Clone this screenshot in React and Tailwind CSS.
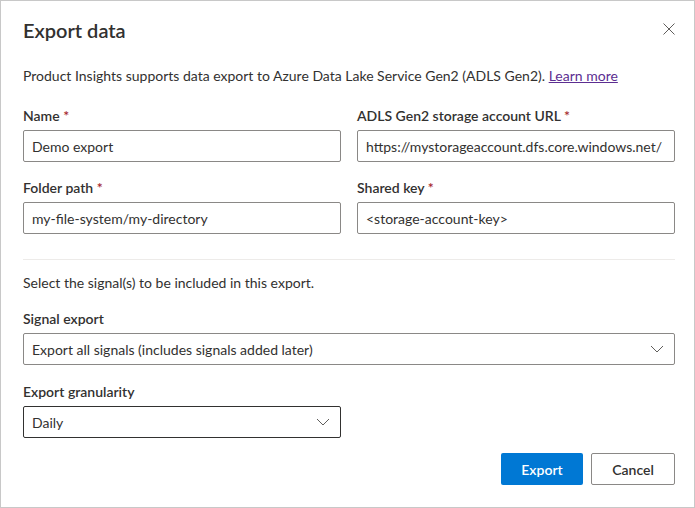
import React from "react";

const font = { fontFamily: 'Lato, "Noto Sans", sans-serif' };

function Label({ children }) {
  return (
    <div className="text-[14px] font-semibold leading-5 text-[#323130] mb-[4px] h-5">
      {children} <span className="text-[#a4262c]">*</span>
    </div>
  );
}

function Field({ label, value }) {
  return (
    <div className="flex flex-col">
      <Label>{label}</Label>
      <div className="h-8 border border-[#8a8886] rounded-[2px] px-2 flex items-center text-[14px] text-[#323130] whitespace-nowrap overflow-hidden">
        {value}
      </div>
    </div>
  );
}

function Chevron() {
  return (
    <svg width="14" height="8" viewBox="0 0 14 8" fill="none">
      <path d="M1 1l6 6 6-6" stroke="#605e5c" strokeWidth="1" />
    </svg>
  );
}

export default function App() {
  return (
    <div className="w-[695px] h-[508px] bg-white border border-[#c8c8c8] text-[#323130]" style={font}>
      <div className="flex items-center justify-between pl-[22px] pr-[19px] pt-[14px] h-[44px]">
        <h1 className="text-[20px] font-semibold leading-7 text-[#323130]">Export data</h1>
        <svg width="12" height="12" viewBox="0 0 12 12" className="mt-[-2px]">
          <path d="M0.5 0.5l11 11M11.5 0.5l-11 11" stroke="#605e5c" strokeWidth="1" />
        </svg>
      </div>
      <div className="pl-[22px] pr-[19px]">
        <p className="text-[14px] leading-5 mt-[21px]">
          Product Insights supports data export to Azure Data Lake Service Gen2 (ADLS Gen2).{" "}
          <span className="text-[#5c2e91] underline">Learn more</span>
        </p>
        <div className="grid grid-cols-2 gap-x-4 gap-y-[16px] mt-[20px]">
          <Field label="Name" value="Demo export" />
          <Field label="ADLS Gen2 storage account URL" value="https://mystorageaccount.dfs.core.windows.net/" />
          <Field label="Folder path" value="my-file-system/my-directory" />
          <Field label="Shared key" value="<storage-account-key>" />
        </div>
        <div className="h-px bg-[#edebe9] mt-[25px]" />
        <p className="text-[14px] leading-5 mt-[13px]">Select the signal(s) to be included in this export.</p>
        <div className="text-[14px] font-semibold leading-5 mt-[16px] mb-[4px]">Signal export</div>
        <div className="h-8 border border-[#8a8886] rounded-[2px] pl-2 pr-[10px] flex items-center justify-between text-[14px]">
          <span>Export all signals (includes signals added later)</span>
          <Chevron />
        </div>
        <div className="text-[14px] font-semibold leading-5 mt-[17px] mb-[4px]">Export granularity</div>
        <div className="w-[318px] h-8 border border-[#323130] rounded-[2px] pl-2 pr-[10px] flex items-center justify-between text-[14px]">
          <span>Daily</span>
          <Chevron />
        </div>
        <div className="flex justify-end gap-2 mt-[15px]">
          <button className="h-8 w-[82px] bg-[#0078d4] rounded-[2px] text-white text-[14px] font-semibold">Export</button>
          <button className="h-8 w-[84px] bg-white border border-[#8a8886] rounded-[2px] text-[#323130] text-[14px] font-semibold">Cancel</button>
        </div>
      </div>
    </div>
  );
}
